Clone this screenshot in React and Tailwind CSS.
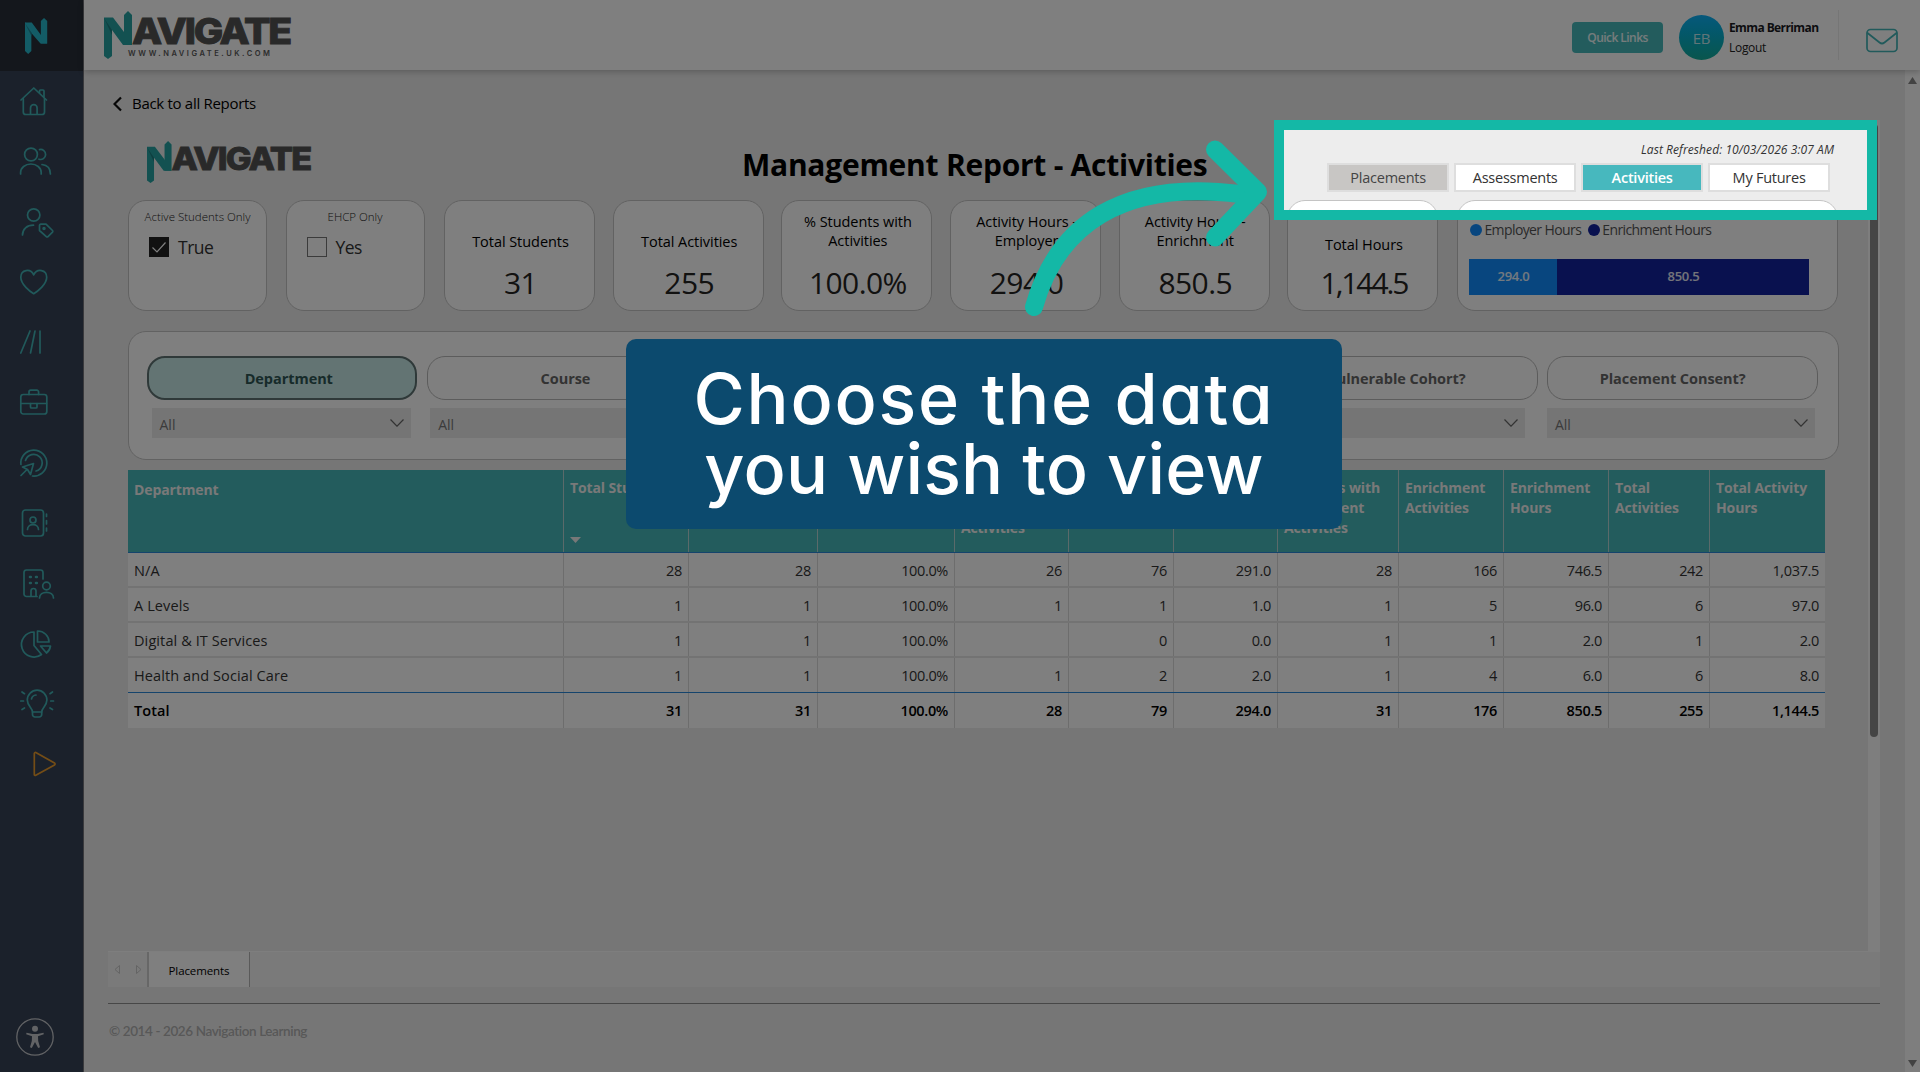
import React from 'react';

const stroke = {
  fill: 'none',
  stroke: 'currentColor',
  strokeWidth: 1.7,
  strokeLinecap: 'round',
  strokeLinejoin: 'round',
};

const navIcons = [
  // home
  <g key="home">
    <path d="M3 17 L15.8 5 L28.5 17" />
    <path d="M5.3 15.500 V29 a2.500 2.500 0 0 0 2.500 2.500 H24 a2.500 2.500 0 0 0 2.500 -2.500 V15.500" />
    <path d="M12.500 31 V25 a3.300 3.300 0 0 1 6.600 0 V31" />
    <path d="M21.500 9.500 V8 a1 1 0 0 1 1 -1 H25 a1 1 0 0 1 1 1 V14" />
  </g>,
  // students
  <g key="users">
    <circle cx="13" cy="11.500" r="6.400" />
    <path d="M2.600 31 V29.500 a10.300 8.500 0 0 1 20.600 0 V31" />
    <path d="M21.500 6.600 a5 5 0 1 1 -0.500 9.600" />
    <path d="M24 21.500 c5 .6 8.400 4 8.400 9.500" />
  </g>,
  // tagged student
  <g key="tag">
    <circle cx="15.700" cy="11" r="6.200" />
    <path d="M4.500 31 c0 -6 4.500 -9.800 11 -9.800" />
    <path d="M21.500 21.500 a1.300 1.300 0 0 1 1.300 -1.300 H28 L34.500 26.500 a1.200 1.200 0 0 1 0 1.600 L30 32.600 a1.200 1.200 0 0 1 -1.700 0 L21.500 26.500 Z" />
    <circle cx="26" cy="24.500" r=".9" />
  </g>,
  // heart
  <path key="heart" d="M15.700 29.700 C12 27.500 2.800 20.500 2.800 13.300 C2.800 5.500 12.500 4 15.700 10.800 C19 4 28.700 5.500 28.700 13.300 C28.700 20.500 19.400 27.500 15.700 29.700 Z" />,
  // courses
  <path key="lines" d="M2.800 29 L12 7 M12.500 29 L17 7 M22 29 V7" />,
  // placements
  <g key="briefcase">
    <rect x="2.800" y="9.500" width="26" height="19.500" rx="2.500" />
    <path d="M11 9.500 V7 a1.800 1.800 0 0 1 1.800 -1.800 H18.800 a1.800 1.800 0 0 1 1.800 1.800 V9.500" />
    <path d="M3 18.500 H12.500 M19 18.500 H28.500" />
    <path d="M12.500 18.500 V22 a1 1 0 0 0 1 1 H18 a1 1 0 0 0 1 -1 V18.500 Z" />
  </g>,
  // activities
  <g key="target">
    <path d="M2.900 19.500 A13 13 0 1 1 14.500 31" />
    <path d="M7.500 15.500 A8.500 8.500 0 1 1 18 26" />
    <path d="M3 30.500 L8.500 25 M4.500 22 L15.500 18.500 L12.500 29.500 L9.500 24.500 Z" />
  </g>,
  // contacts
  <g key="contacts">
    <rect x="4.500" y="5" width="21" height="26" rx="3" />
    <circle cx="15" cy="15" r="3" />
    <path d="M9.500 24.500 c0 -6.500 11 -6.500 11 0" />
    <path d="M28.500 9 V11.500 M28.500 15.500 V19 M28.500 23 V26" />
  </g>,
  // employers
  <g key="building">
    <path d="M19 30.500 H8.500 a2.500 2.500 0 0 1 -2.500 -2.500 V6.500 a2.500 2.500 0 0 1 2.500 -2.500 H22.500 a2.500 2.500 0 0 1 2.500 2.500 V13" />
    <path d="M13 30 V25 a2.500 2.500 0 0 1 5 0 V30" />
    <path d="M12 11 h.8 M18 11 h.8 M12 17 h.8 M18 17 h.8" strokeWidth="2.600" />
    <circle cx="28.500" cy="20" r="3.800" />
    <path d="M21.500 32 c0 -7.500 14 -7.500 14 0" />
  </g>,
  // reports
  <g key="pie">
    <path d="M16 6 A12.500 12.500 0 1 0 23.500 28.500 L16 19.500 Z" />
    <path d="M19.500 5 V16 H31 C31 10 26 5 19.500 5 Z" />
    <path d="M22.500 20 H32.500 C32 23 30.500 25.500 28.500 27 Z" />
  </g>,
  // ideas
  <g key="bulb">
    <path d="M14.500 26 C14.500 22 9.300 20 9.300 14 a9.800 9.800 0 0 1 19.600 0 C28.900 20 23.700 22 23.700 26 Z" />
    <path d="M14.500 26 V28.500 a2.500 2.500 0 0 0 2.500 2.500 H21.200 a2.500 2.500 0 0 0 2.500 -2.500 V26" />
    <path d="M13.500 13 C14 10.500 15.500 9.300 18 9" />
    <path d="M2.800 15 H5.500 M32.800 15 H35.500 M4 6 L6.500 7.700 M34.500 6 L32 7.700 M4 23.500 L6.500 22 M34.500 23.500 L32 22" />
  </g>,
];

const kpis = [
  { label: ['Total Students'], value: '31' },
  { label: ['Total Activities'], value: '255' },
  { label: ['% Students with', 'Activities'], value: '100.0%' },
  { label: ['Activity Hours -', 'Employer'], value: '294.0' },
  { label: ['Activity Hours -', 'Enrichment'], value: '850.5' },
];

const columns = [
  { lines: ['Department'], width: 435 },
  { lines: ['Total Students'], width: 125, sorted: true },
  { lines: ['Students with', 'Activities'], width: 129 },
  { lines: ['% Students', 'with Activities'], width: 137 },
  { lines: ['Students with', 'Employer', 'Activities'], width: 114 },
  { lines: ['Employer', 'Activities'], width: 105 },
  { lines: ['Employer', 'Hours'], width: 104 },
  { lines: ['Students with', 'Enrichment', 'Activities'], width: 121 },
  { lines: ['Enrichment', 'Activities'], width: 105 },
  { lines: ['Enrichment', 'Hours'], width: 105 },
  { lines: ['Total', 'Activities'], width: 101 },
  { lines: ['Total Activity', 'Hours'], width: 116 },
];

const rows = [
  ['N/A', '28', '28', '100.0%', '26', '76', '291.0', '28', '166', '746.5', '242', '1,037.5'],
  ['A Levels', '1', '1', '100.0%', '1', '1', '1.0', '1', '5', '96.0', '6', '97.0'],
  ['Digital & IT Services', '1', '1', '100.0%', '', '0', '0.0', '1', '1', '2.0', '1', '2.0'],
  ['Health and Social Care', '1', '1', '100.0%', '1', '2', '2.0', '1', '4', '6.0', '6', '8.0'],
];

const totals = ['Total', '31', '31', '100.0%', '28', '79', '294.0', '31', '176', '850.5', '255', '1,144.5'];

const filters = [
  { name: 'Department', style: 'border-2 border-[#5f7373] bg-[#c6e8e6] pl-[14px] text-[#2f5655]' },
  { name: 'Course', style: 'border-[1.5px] border-[#b8b8b8] pl-[7px] text-[#666]' },
  { name: 'Year Group', style: 'border-[1.5px] border-[#b8b8b8] text-[#666]' },
  { name: 'Campus', style: 'border-[1.5px] border-[#b8b8b8] text-[#666]' },
  { name: 'Vulnerable Cohort?', style: 'border-[1.5px] border-[#b8b8b8] pr-[12px] text-[#666]' },
  { name: 'Placement Consent?', style: 'border-[1.5px] border-[#b8b8b8] pr-[20px] text-[#666]' },
];

function Logo({ className, tagline }) {
  return (
    <svg className={className} viewBox="0 0 196 49">
      <path d="M0 10 H4 L8 15 V45 L4 48 L0 45 Z" fill="#27a3a3" />
      <path d="M20 4 L24 0 L28 4 V34 H20 Z" fill="#27a3a3" />
      <path d="M0 6.500 H9 L20 21 L28 34 H19 L8 19 L0 12 Z" fill="#27a3a3" />
      <path d="M0 7 L8 19 V24 Z" fill="#1d7f80" />
      <text
        x="28"
        y="33"
        fontSize="35.500"
        fontWeight="800"
        fontFamily="Inter, sans-serif"
        fill="#535353"
        stroke="#535353"
        strokeWidth="0.900"
        letterSpacing="-2"
        textLength="158"
        lengthAdjust="spacingAndGlyphs"
      >
        AVIGATE
      </text>
      {tagline && (
        <text x="24" y="44.800" fontSize="7.500" fontWeight="600" fontFamily="Inter, sans-serif" fill="#5a5a5a" textLength="142">
          WWW.NAVIGATE.UK.COM
        </text>
      )}
    </svg>
  );
}

function Sidebar() {
  return (
    <aside className="flex w-[84px] shrink-0 flex-col border-r border-[#75757b] bg-[#364256] text-[#42b4b6]">
      <div className="flex h-[71px] items-center bg-[#282e38] pl-[25px]">
        <svg className="h-9 w-[23px]" viewBox="0 0 29 48" preserveAspectRatio="none">
          <path d="M0 6 L8 10 V44 L4 48 L0 44 Z M20 4 L24 0 L28 4 V34 H20 Z" fill="#27b9cd" />
          <path d="M0 6 H8.500 L28 34 H19.500 L8 20 L0 12 Z" fill="#27b9cd" />
          <path d="M0 7 L8 19 V24 Z" fill="#1d8797" />
        </svg>
      </div>
      <nav className="flex flex-col pl-[18px]">
        {navIcons.map((icon) => (
          <div key={icon.key} className="flex h-[60.3px] items-center">
            <svg className="h-9 w-10" viewBox="0 0 40 36" {...stroke}>{icon}</svg>
          </div>
        ))}
        <div className="flex h-[60.3px] items-center text-[#e89a2c]">
          <svg className="h-9 w-10" viewBox="0 0 40 36" {...stroke}>
            <path d="M16.300 7.500 a1 1 0 0 1 1.500 -.9 L36.500 17 a1.100 1.100 0 0 1 0 1.900 L17.800 29.300 a1 1 0 0 1 -1.500 -.9 Z" />
          </svg>
        </div>
      </nav>
      <div className="mt-auto mb-4 ml-4">
        <svg className="size-[38px]" viewBox="0 0 38 38">
          <circle cx="19" cy="19" r="18.200" fill="none" stroke="#c4c6ca" strokeWidth="1.300" />
          <circle cx="19" cy="10.700" r="3" fill="#c4c6ca" />
          <path d="M10.500 14.800 L16.500 16 H21.500 L27.500 14.800 L27.800 16.300 L22 18.200 L22.200 23 L24 29.300 L22.200 30 L19 24 L15.800 30 L14 29.300 L15.800 23 L16 18.200 L10.200 16.300 Z" fill="#c4c6ca" />
        </svg>
      </div>
    </aside>
  );
}

function Header() {
  return (
    <header className="z-10 flex h-[70px] shrink-0 items-start bg-white pl-5 shadow-[0_2px_6px_rgba(0,0,0,0.22)]">
      <Logo className="mt-[11px] h-[49px] w-[196px]" tagline />
      <div className="mt-[22px] ml-auto flex h-[31px] w-[91px] items-center justify-center rounded bg-[#46b8ba] text-[12px] font-semibold tracking-[-0.55px] text-white/90">
        Quick Links
      </div>
      <div className="mt-[15px] ml-4 flex size-[45px] items-center justify-center rounded-full bg-linear-to-b from-[#0eb0f8] to-[#14ac9a] pt-px text-[15px] tracking-[-0.3px] text-white/75">
        EB
      </div>
      <div className="mt-[18px] ml-[5px] w-[109px] text-[12px] leading-5 tracking-[-0.3px]">
        <p className="font-bold tracking-[-0.6px] text-[#1a1a1f]">Emma Berriman</p>
        <p className="text-[#222]">Logout</p>
      </div>
      <div className="mt-[10px] h-[50px] w-px bg-[#ececec]" />
      <svg className="mt-7 mr-[22px] ml-[27px] h-[25px] w-8 text-[#42b4b6]" viewBox="0 0 32 25" {...stroke}>
        <rect x="1" y="1.500" width="30" height="22" rx="3.500" />
        <path d="M1.500 5 L13.500 14.500 a4 4 0 0 0 5 0 L30.500 5" />
      </svg>
    </header>
  );
}

function Tab({ children, className }) {
  return (
    <div className={`flex h-[29px] w-[122.300px] items-center justify-center border-2 border-[#dedede] pt-px text-[14.500px] tracking-[-0.25px] ${className}`}>
      {children}
    </div>
  );
}

function Card({ children, className }) {
  return <div className={`h-[111px] shrink-0 rounded-[18px] border-[1.5px] border-[#c4c4c4] bg-white ${className}`}>{children}</div>;
}

function CheckCard({ title, label, checked }) {
  return (
    <Card className="w-[139px]">
      <p className="pt-[7px] text-center text-[11.5px] leading-[18px] font-light text-[#222]">{title}</p>
      <div className="mt-[11px] flex items-center gap-[9px] pl-5">
        <span className={`flex size-5 items-center justify-center border ${checked ? 'border-[#222] bg-[#222]' : 'border-[#777]'}`}>
          {checked && (
            <svg className="size-4" viewBox="0 0 16 16" fill="none" stroke="#fff" strokeWidth="1.200">
              <path d="M1.500 8.500 L6 13 L14.500 3.500" />
            </svg>
          )}
        </span>
        <span className="text-[17.5px] leading-5 tracking-[-0.5px] text-[#333]">{label}</span>
      </div>
    </Card>
  );
}

function Kpi({ label, value, className = 'pb-[12px]', valueClass = 'tracking-[-0.6px]' }) {
  return (
    <Card className="w-[151px] pl-[2px] text-center">
      <div className={`flex h-[62px] flex-col justify-end text-[14.500px] leading-[19px] tracking-[-0.05px] text-black ${className}`}>
        {label.map((line) => (
          <span key={line}>{line}</span>
        ))}
      </div>
      <p className={`text-[30px] leading-[40px] text-[#252423] ${valueClass}`}>{value}</p>
    </Card>
  );
}

function Chevron() {
  return (
    <svg className="h-2 w-[14px]" viewBox="0 0 14 8" fill="none" stroke="#666" strokeWidth="1.200">
      <path d="M.5 .5 L7 7.200 L13.500 .5" />
    </svg>
  );
}

function Filters() {
  return (
    <section className="mt-[20px] ml-5 h-[129px] w-[1711px] rounded-[18px] border-[1.5px] border-[#c4c4c4] bg-white">
      <div className="mt-6 ml-[17.5px] flex gap-[9.7px]">
        {filters.map(({ name, style }) => (
          <div
            key={name}
            className={`flex h-11 w-[270.5px] items-center justify-center rounded-[18px] pt-[2px] text-[14.500px] font-bold tracking-[-0.05px] ${style}`}
          >
            {name}
          </div>
        ))}
      </div>
      <div className="mt-2 ml-[22.5px] flex gap-[19.7px]">
        {filters.map(({ name }, i) => (
          <div
            key={name}
            className={`flex h-[30px] shrink-0 items-center justify-between bg-[#eaeaea] pr-[7px] pl-2 text-[14px] text-[#777] ${i === 5 ? 'ml-[2px] w-[268px]' : 'w-[259px]'}`}
          >
            <span className="pt-[2px]">All</span>
            <Chevron />
          </div>
        ))}
      </div>
    </section>
  );
}

function Row({ cells, className }) {
  return (
    <div className={`flex h-[35px] bg-white text-[14.500px] ${className}`}>
      {cells.map((cell, i) => (
        <div
          key={i}
          className={`shrink-0 px-[6px] ${i ? 'border-l border-[#dadada] text-right tracking-[-0.35px]' : 'text-left tracking-[0.1px]'}`}
          style={{ width: columns[i].width }}
        >
          {cell}
        </div>
      ))}
    </div>
  );
}

function DataTable() {
  return (
    <section className="mt-[10px] ml-5 w-[1697px]">
      <div className="flex h-[83px] border-b border-[#2a88d8] bg-[#46b8ba] text-[14px] leading-5 font-bold tracking-[-0.12px] text-[#f2f2f2]">
        {columns.map((col, i) => (
          <div
            key={i}
            className={`flex shrink-0 flex-col pl-[6px] ${i ? 'border-l border-[#b5d4d4] pt-2' : 'pt-[10px]'}`}
            style={{ width: col.width }}
          >
            {col.lines.map((line) => (
              <span key={line} className="whitespace-nowrap">{line}</span>
            ))}
            {col.sorted && (
              <svg className="mt-auto mb-[9px] h-[6px] w-[11px]" viewBox="0 0 11 6">
                <path d="M0 0 H11 L5.500 6 Z" fill="#f0f0f0" />
              </svg>
            )}
          </div>
        ))}
      </div>
      {rows.map((cells, i) => (
        <Row
          key={cells[0]}
          cells={cells}
          className={`leading-[36px] text-[#333] ${i === rows.length - 1 ? 'border-b border-[#2a88d8]' : 'border-b-2 border-[#e6e6e6]'}`}
        />
      ))}
      <Row cells={totals} className="leading-[35px] font-semibold text-black" />
    </section>
  );
}

function Report() {
  return (
    <div className="flex h-[831px]">
      <div className="flex w-[1760px] flex-col">
        <div className="flex h-20 shrink-0 items-start">
          <Logo className="mt-[21px] ml-[39px] h-[43px] w-[172px]" />
          <h1 className="mt-[25px] ml-[423px] w-[585px] text-[30px] leading-10 font-bold tracking-[-0.25px] whitespace-nowrap text-black">
            Management Report - Activities
          </h1>
          <div className="flex w-[507px] flex-col pt-[21px]">
            <p className="text-right text-[12px] leading-[18px] tracking-[0.08px] text-[#333] italic">Last Refreshed: 10/03/2026 3:07 AM</p>
            <div className="mt-[4px] flex gap-[4.700px]">
              <Tab className="bg-[#c8c6c4] text-[#444]">Placements</Tab>
              <Tab className="bg-white text-[#333]">Assessments</Tab>
              <Tab className="bg-[#47b8be] font-semibold text-white">Activities</Tab>
              <Tab className="bg-white text-[#333]">My Futures</Tab>
            </div>
          </div>
        </div>
        <div className="flex pl-5">
          <CheckCard title="Active Students Only" label="True" checked />
          <div className="w-[18.500px]" />
          <CheckCard title="EHCP Only" label="Yes" />
          <div className="ml-[19.500px] flex gap-[17.700px]">
            {kpis.map((kpi) => (
              <Kpi key={kpi.label.join(' ')} {...kpi} className={kpi.label.length > 1 ? 'pb-[13px]' : 'pb-[12px]'} />
            ))}
            <Kpi label={['Total Hours']} value="1,144.5" className="pb-[9px]" valueClass="tracking-[-2.100px]" />
          </div>
          <Card className="ml-[19px] w-[381px] pl-[11px]">
            <div className="mt-[19px] flex items-center text-[14px] leading-5 tracking-[-0.6px] text-[#555]">
              <span className="mr-[2px] ml-px size-3 rounded-full bg-[#118dff]" />
              Employer Hours
              <span className="mr-[2px] ml-[7px] size-3 rounded-full bg-[#12239e]" />
              Enrichment Hours
            </div>
            <div className="mt-[18.500px] flex h-9 w-[340px] text-[13px] font-semibold tracking-[-0.3px] text-white/90">
              <div className="flex w-[88px] items-center justify-center bg-[#118dff]">294.0</div>
              <div className="flex flex-1 items-center justify-center bg-[#12239e]">850.5</div>
            </div>
          </Card>
        </div>
        <Filters />
        <DataTable />
      </div>
      <div className="flex w-3 justify-center bg-[#fcfcfc]">
        <div className="mt-1 h-[613px] w-2 rounded-full bg-[#8a8a8a]" />
      </div>
    </div>
  );
}

function PageTabs() {
  return (
    <div className="flex h-9 border-t border-[#fdfdfd] bg-[#f4f4f4]">
      <div className="flex w-[41px] items-center gap-4 border-r-2 border-[#cfcfcf] pl-[6px]">
        <svg className="h-[9px] w-[6px]" viewBox="0 0 6 9" fill="none" stroke="#c8c8c8"><path d="M5.500 .5 V8.500 L1 4.500 Z" /></svg>
        <svg className="h-[9px] w-[6px]" viewBox="0 0 6 9" fill="none" stroke="#c8c8c8"><path d="M.5 .5 V8.500 L5 4.500 Z" /></svg>
      </div>
      <div className="flex w-[101px] items-center justify-center border-r border-[#b5b5b5] bg-white pt-[3px] text-[11.5px] tracking-[-0.1px] text-black">
        Placements
      </div>
    </div>
  );
}

function Callout() {
  return (
    <div className="absolute inset-0 z-20 overflow-hidden">
      {/* spotlight: everything outside the frame is dimmed */}
      <div className="absolute top-[120px] left-[1274px] h-[100px] w-[603px] border-10 border-[#14b8a6] shadow-[0_0_0_2000px_rgba(0,0,0,0.5)]" />
      <svg className="absolute top-[130px] left-[1010px] h-[200px] w-[270px]" viewBox="1010 130 270 200" fill="none" stroke="#14b8a6" strokeWidth="18" strokeLinecap="round" strokeLinejoin="round">
        <path d="M1034 307 C1057 225 1122 179 1240 194" />
        <path d="M1215 149.500 L1258 192 L1215 237.500" />
      </svg>
      <div className="absolute top-[339px] left-[626px] flex h-[190px] w-[716px] flex-col items-center justify-center rounded-[10px] bg-[#0c4a6e] font-[Inter] text-[70px] leading-[70px] font-medium whitespace-nowrap text-white [font-feature-settings:'cv11']">
        <span className="tracking-[1.800px]">Choose the data</span>
        <span className="tracking-[0.200px]">you wish to view</span>
      </div>
    </div>
  );
}

export default function App() {
  return (
    <div className="relative flex h-[1072px] w-[1920px] overflow-hidden bg-[#ededed] font-['Open_Sans','Noto_Sans',sans-serif]">
      <Sidebar />
      <div className="flex flex-1 flex-col">
        <Header />
        <div className="flex flex-1">
          <main className="flex w-[1821px] flex-col pr-[25px] pl-6">
            <div className="flex h-[50px] items-center pt-[17px] pl-[5px] text-[15px] tracking-[-0.3px] text-black">
              <svg className="mr-[10px] h-4 w-[9px]" viewBox="0 0 9 16" fill="none" stroke="#111" strokeWidth="2.200"><path d="M8 1.500 L1.500 8 L8 14.500" /></svg>
              Back to all Reports
            </div>
            <Report />
            <PageTabs />
            <footer className="mt-4 border-t border-[#8e8e8e] pt-[17px] pl-px font-[Lato] text-[13.500px] leading-5 font-semibold tracking-[-0.4px] text-[#b0b0b0]">
              © 2014 - 2026 Navigation Learning
            </footer>
          </main>
          <div className="flex w-[15px] flex-col items-center justify-between bg-[#fcfcfc] pt-[7px] pb-[5px]">
            <svg className="h-[7px] w-[9px]" viewBox="0 0 9 7"><path d="M0 7 L4.500 0 L9 7 Z" fill="#868686" /></svg>
            <svg className="h-[7px] w-[9px]" viewBox="0 0 9 7"><path d="M0 0 H9 L4.500 7 Z" fill="#868686" /></svg>
          </div>
        </div>
      </div>
      <Callout />
    </div>
  );
}
